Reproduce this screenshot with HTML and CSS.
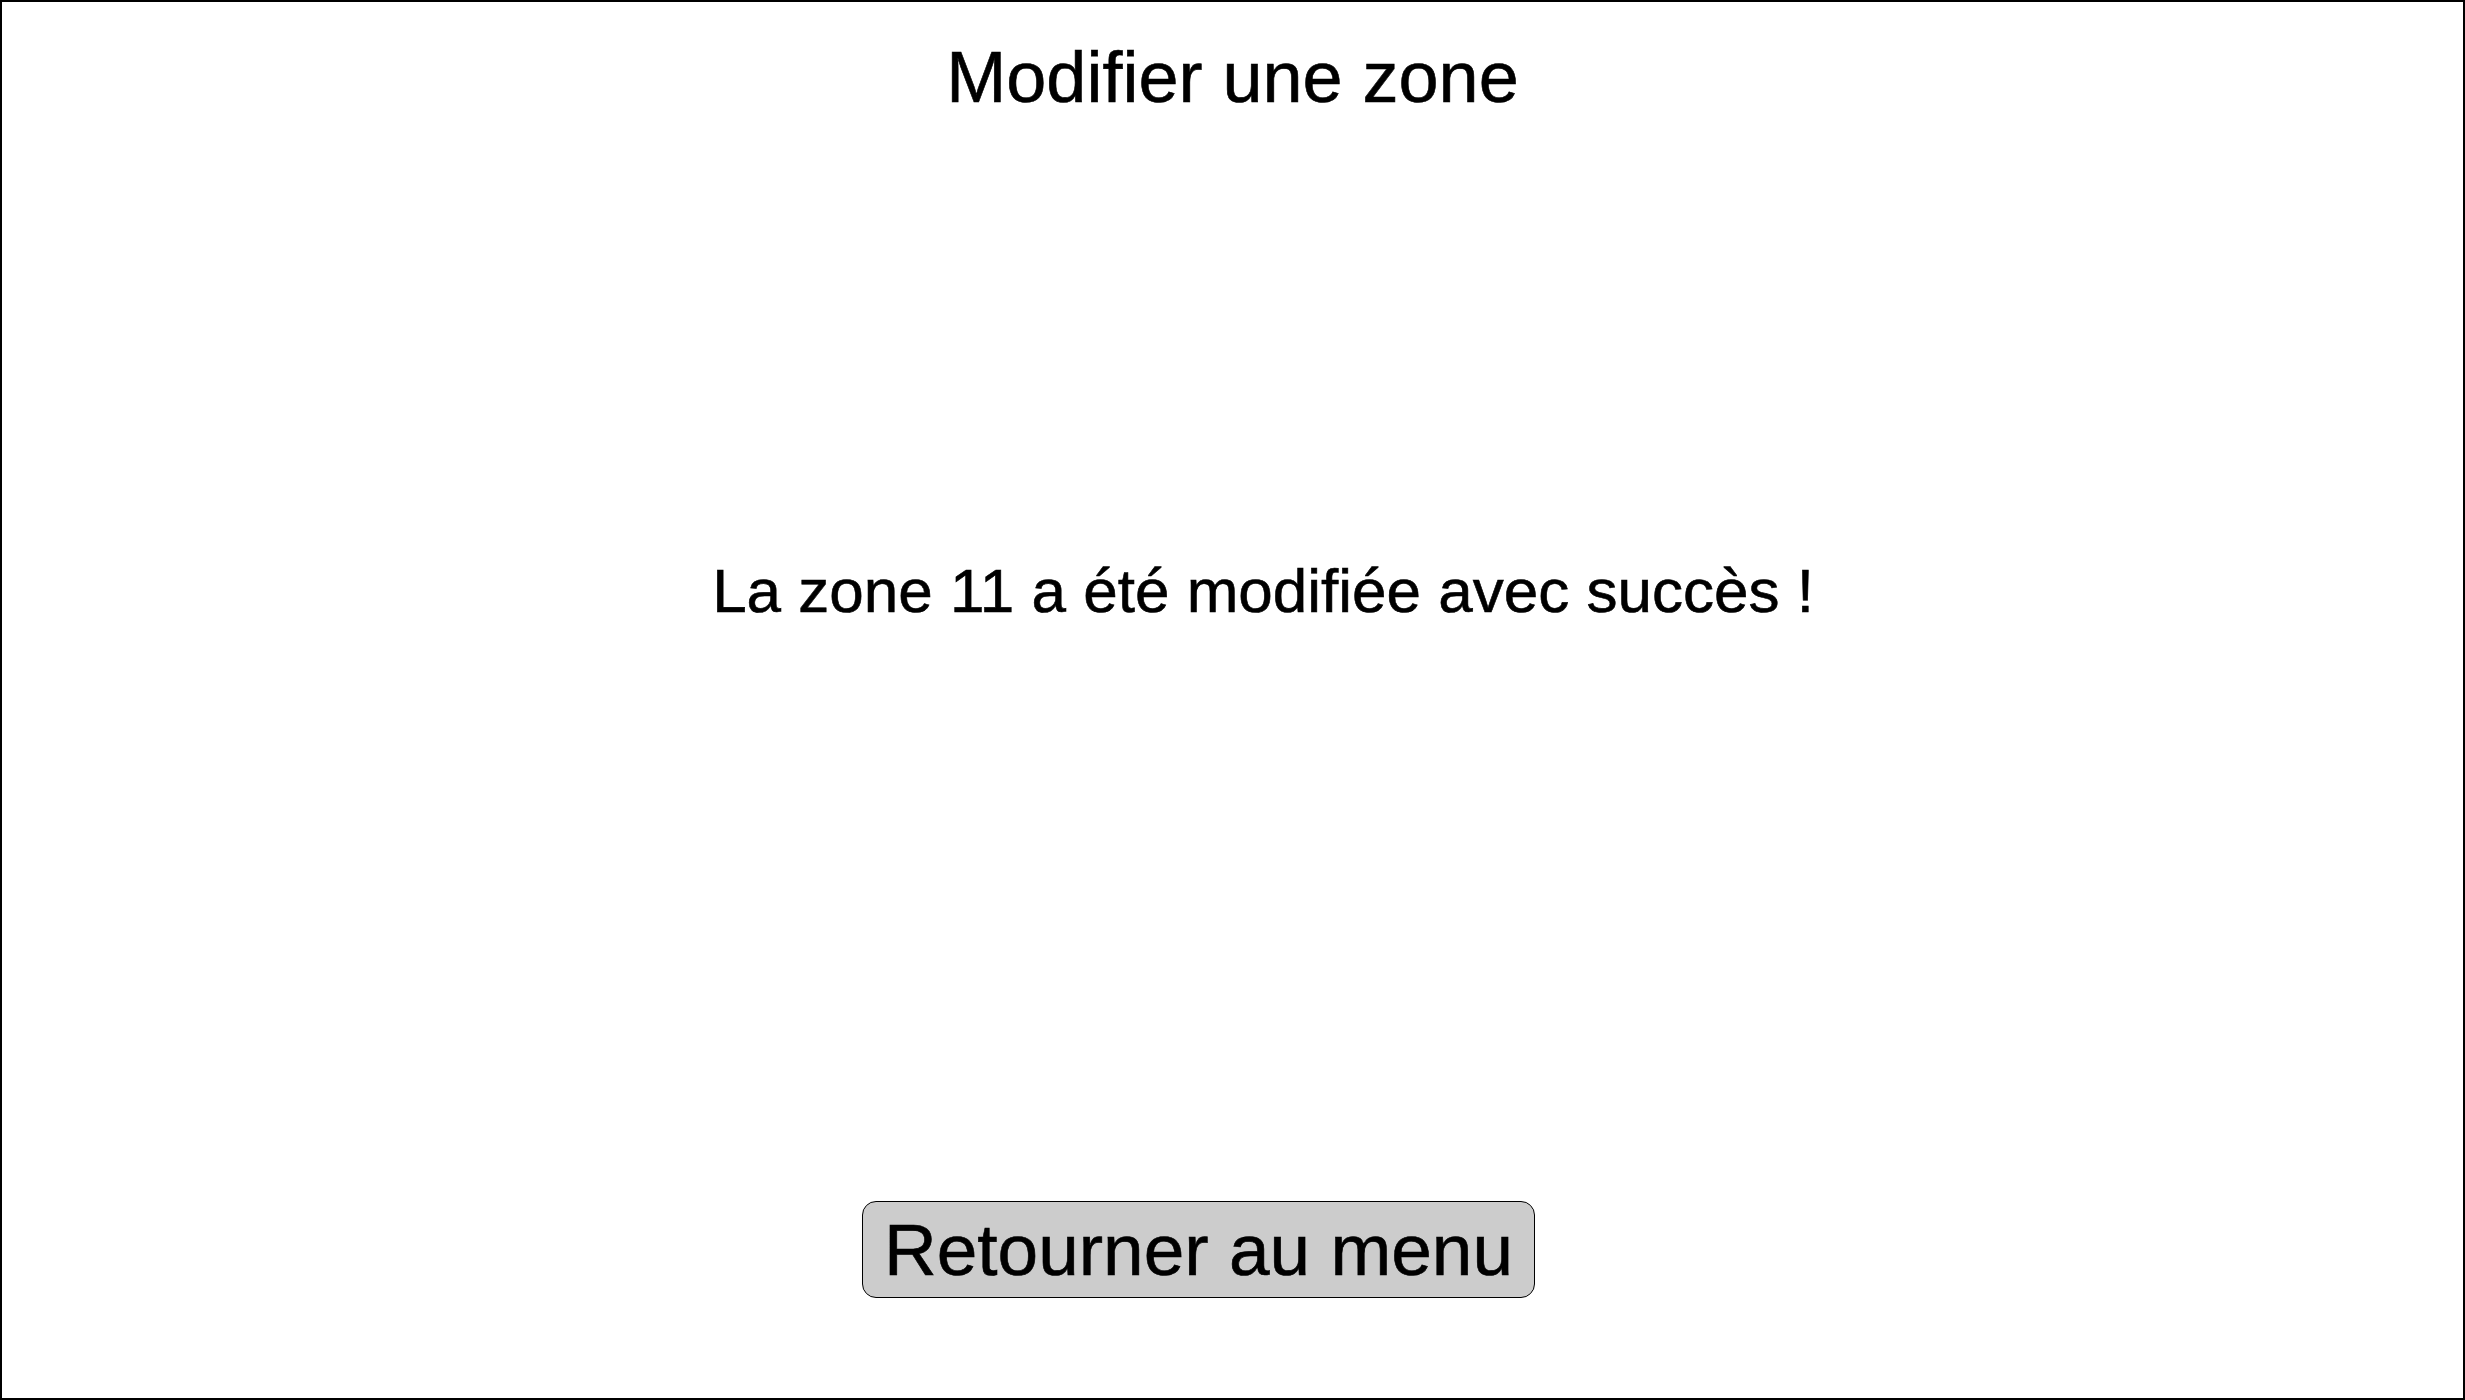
FILE: index.html
```html
<!DOCTYPE html>
<html lang="fr">
<head>
<meta charset="utf-8">
<title>Modifier une zone</title>
<link rel="stylesheet" href="styles.css">
</head>
<body>
<div class="frame">
  <h1 class="title">Modifier une zone</h1>
  <p class="message">La zone 11 a été modifiée avec succès !</p>
  <div class="actions">
    <button class="btn" type="button">Retourner au menu</button>
  </div>
</div>
</body>
</html>
```
FILE: styles.css
```css
html, body {
  margin: 0;
  padding: 0;
  background: #fff;
}
body {
  font-family: "Liberation Sans", Arial, sans-serif;
  color: #000;
}
.frame {
  box-sizing: border-box;
  width: 2465px;
  height: 1400px;
  border: 2px solid #000;
  display: flex;
  flex-direction: column;
}
.title {
  margin: 35px 0 0 0;
  text-align: center;
  font-size: 72px;
  font-weight: normal;
  line-height: 80px;
  -webkit-text-stroke: 0.6px #000;
}
.message {
  margin: 439px 0 0 681px;
  font-size: 62px;
  line-height: 70px;
  width: 1160px;
  white-space: nowrap;
  text-align: center;
  -webkit-text-stroke: 0.6px #000;
}
.actions {
  margin: 575px 0 0 860px;
}
.btn {
  box-sizing: border-box;
  width: 673px;
  height: 97px;
  background: #cccccc;
  border: 1.5px solid #000;
  border-radius: 14px;
  font-family: "Liberation Sans", Arial, sans-serif;
  font-size: 73px;
  color: #000;
  padding: 0;
  line-height: 1;
  white-space: nowrap;
  -webkit-text-stroke: 0.6px #000;
}
```
